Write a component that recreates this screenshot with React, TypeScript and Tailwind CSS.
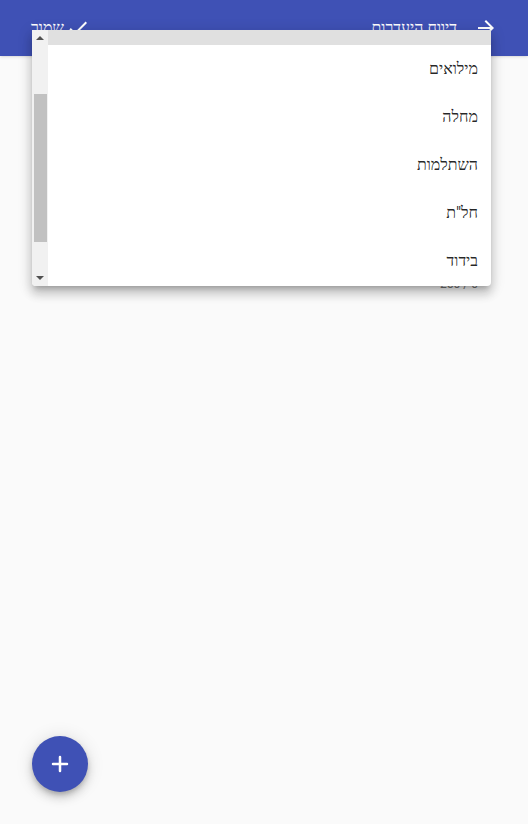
import { Plus } from "lucide-react";

const items = ["מילואים", "מחלה", "השתלמות", 'חל"ת', "בידוד"];

function ArrowForward() {
  return (
    <svg viewBox="0 0 24 24" className="w-6 h-6 fill-current">
      <path d="M12 4l-1.41 1.41L16.17 11H4v2h12.17l-5.58 5.59L12 20l8-8z" />
    </svg>
  );
}

function CheckIcon() {
  return (
    <svg viewBox="0 0 24 24" className="w-6 h-6 fill-current">
      <path d="M9 16.17L4.83 12l-1.42 1.41L9 19 21 7l-1.41-1.41z" />
    </svg>
  );
}

export default function App() {
  return (
    <div
      dir="rtl"
      className="relative w-[528px] h-[824px] overflow-hidden bg-[#fafafa] font-[family-name:Roboto,serif]"
    >
      {/* toolbar */}
      <header className="h-14 bg-[#3f51b5] text-white flex items-center pr-[30px] pl-[31px] shadow-sm">
        <ArrowForward />
        <h1 className="mr-[17px] text-base font-medium">דיווח היעדרות</h1>
        <div className="mr-auto flex items-center gap-[2px] text-base font-medium">
          <CheckIcon />
          <span>שמור</span>
        </div>
      </header>

      {/* form behind menu */}
      <div className="px-[48px] pt-[190px]">
        <div className="h-[30px]" />
        <div className="flex">
          <span dir="ltr" className="w-full text-right pr-[2px] text-xs text-[#757575]">
            250 / 0
          </span>
        </div>
      </div>

      {/* select menu */}
      <div className="absolute left-[32px] top-[30px] w-[459px] h-[256px] bg-white rounded-b shadow-[0_5px_5px_-3px_rgba(0,0,0,0.2),0_8px_10px_1px_rgba(0,0,0,0.14),0_3px_14px_2px_rgba(0,0,0,0.12)] flex flex-row-reverse overflow-hidden">
        {/* scrollbar */}
        <div className="w-4 h-full bg-[#f1f1f1] flex flex-col items-center">
          <div className="h-[16px] flex items-center justify-center">
            <div className="w-0 h-0 border-l-[4px] border-r-[4px] border-b-[4px] border-l-transparent border-r-transparent border-b-[#505050]" />
          </div>
          <div className="h-[48px]" />
          <div className="w-[13px] h-[148px] bg-[#c1c1c1]" />
          <div className="flex-1" />
          <div className="h-[16px] flex items-center justify-center">
            <div className="w-0 h-0 border-l-[4px] border-r-[4px] border-t-[4px] border-l-transparent border-r-transparent border-t-[#505050]" />
          </div>
        </div>
        {/* options */}
        <div className="flex-1 flex flex-col">
          <div className="h-[15px] bg-[#e0e0e0]" />
          {items.map((t) => (
            <div key={t} className="h-12 flex items-center pl-4 pr-[13px] text-base text-[rgba(0,0,0,0.87)]">
              {t}
            </div>
          ))}
        </div>
      </div>

      {/* fab */}
      <button className="absolute left-[32px] top-[736px] w-14 h-14 rounded-full bg-[#3f51b5] text-white flex items-center justify-center shadow-[0_3px_5px_-1px_rgba(0,0,0,0.2),0_6px_10px_0_rgba(0,0,0,0.14),0_1px_18px_0_rgba(0,0,0,0.12)]">
        <Plus className="w-6 h-6" strokeWidth={2.5} />
      </button>
    </div>
  );
}
